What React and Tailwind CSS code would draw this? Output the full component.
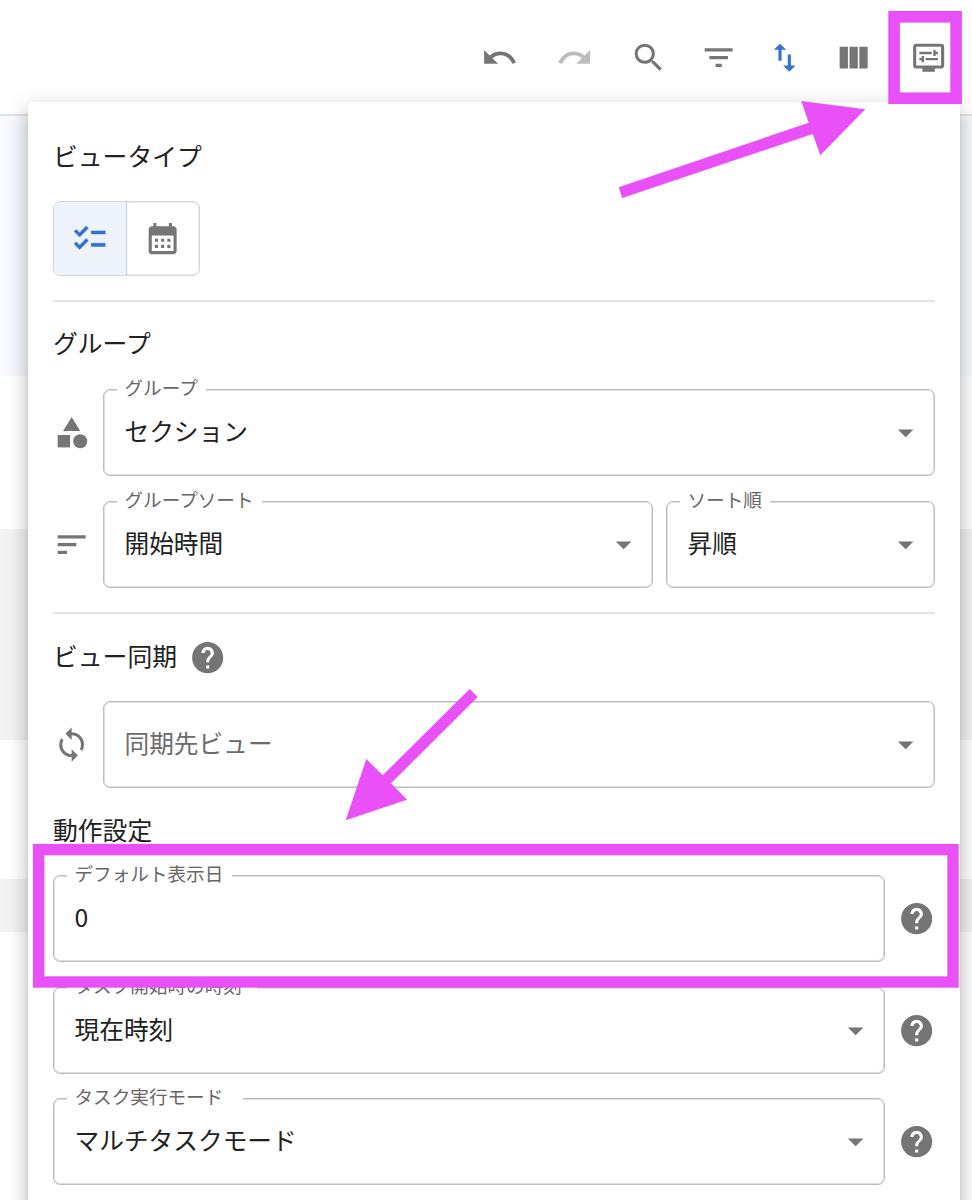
import {
  MdArrowDropDown,
  MdCalendarMonth,
  MdCategory,
  MdChecklist,
  MdDisplaySettings,
  MdFilterList,
  MdHelp,
  MdImportExport,
  MdRedo,
  MdSearch,
  MdSort,
  MdSync,
  MdUndo,
  MdViewColumn,
} from 'react-icons/md'

const ICON = 'size-[37.3px] shrink-0 text-[#757575]'

function Heading({ children, icon, className = '' }) {
  return (
    <h2 className={`flex items-center h-[37px] text-[24.8px] leading-[37px] ${className}`}>
      <span className="-mt-[4px]">{children}</span>
      {icon}
    </h2>
  )
}

// Outlined field; the label sits in a gap of the top border
function Field({ label, notch, value, placeholder, select = true, className = 'flex-1' }) {
  return (
    <div className={`relative flex items-center justify-between h-[87px] pl-[20.5px] pr-[10px] border border-[#bdbdbd] rounded-[7px] shadow-[inset_0_0_0_1px_#dedede] ${className}`}>
      {label && (
        <span className={`absolute left-[13px] -top-[17px] h-[28px] pl-[7.5px] leading-[28px] text-[18.6px] whitespace-nowrap bg-white text-[#666] ${notch}`}>
          {label}
        </span>
      )}
      <span className={`text-[24.7px] leading-[36px] -mt-[5px] ${placeholder ? 'text-[#6b6b6b]' : ''}`}>{value || placeholder}</span>
      {select && <MdArrowDropDown className={ICON} />}
    </div>
  )
}

function Toolbar() {
  return (
    <header className="flex h-[116px] pt-[39.4px] pl-[481px] border-b-2 border-[#e2e2e4] bg-white">
      <MdUndo className={ICON} />
      <MdRedo className="size-[37.3px] shrink-0 ml-[37.5px] text-[#bdbdbd]" />
      <MdSearch className={`${ICON} ml-[37.3px]`} />
      <MdFilterList className={`${ICON} ml-[32.7px]`} />
      <MdImportExport className="size-[37.3px] shrink-0 ml-[28.3px] text-[#3471d2]" />
      <MdViewColumn className={`${ICON} ml-[32.1px]`} />
      <MdDisplaySettings className={`${ICON} ml-[37.3px]`} />
    </header>
  )
}

function ViewMenu() {
  return (
    <div className="absolute left-[28px] top-[102px] w-[932px] h-[1200px] px-[25px] pt-[37px] rounded-[6px] bg-white shadow-[0_8px_8px_-5px_rgba(0,0,0,0.2),0_12px_16px_2px_rgba(0,0,0,0.14),0_5px_22px_3px_rgba(0,0,0,0.12)]">
      <Heading>ビュータイプ</Heading>
      <div className="flex w-[147px] h-[75px] mt-[25px] border border-[#d6d6d6] rounded-[7px] shadow-[inset_0_0_0_1px_#ececec] overflow-hidden">
        <div className="flex items-center justify-center w-[73px] border-r border-[#c6ccd6] bg-[#edf2fb]">
          <MdChecklist className="size-[37.3px] text-[#3471d2] [&>path:last-child]:stroke-current [&>path:last-child]:[stroke-width:0.3]" />
        </div>
        <div className="flex items-center justify-center flex-1">
          <MdCalendarMonth className={ICON} />
        </div>
      </div>

      <hr className="mt-[24px] border-0 h-[2px] bg-[#e3e3e3]" />
      <Heading className="mt-[24px]">グループ</Heading>
      <div className="flex items-center gap-[13.2px] -ml-[0.5px] mt-[26px]">
        <MdCategory className={ICON} />
        <Field label="グループ" notch="w-[89px]" value="セクション" />
      </div>
      <div className="flex items-center gap-[13.2px] -ml-[0.5px] mt-[25px]">
        <MdSort className={ICON} />
        <Field label="グループソート" notch="w-[145px]" value="開始時間" />
        <Field label="ソート順" notch="w-[90px]" value="昇順" className="w-[269px]" />
      </div>

      <hr className="mt-[24px] border-0 h-[2px] bg-[#e3e3e3]" />
      <Heading className="mt-[25px]" icon={<MdHelp className={`${ICON} ml-[12.2px]`} />}>ビュー同期</Heading>
      <div className="flex items-center gap-[13.2px] -ml-[0.5px] mt-[25px]">
        <MdSync className={ICON} />
        <Field placeholder="同期先ビュー" />
      </div>

      <Heading className="mt-[25px]">動作設定</Heading>
      <div className="flex items-center gap-[12.7px] mt-[25px]">
        <Field label="デフォルト表示日" notch="w-[165px]" value="0" select={false} />
        <MdHelp className={ICON} />
      </div>
      <div className="flex items-center gap-[12.7px] mt-[25px]">
        <Field label="タスク開始時の時刻" notch="w-[190px]" value="現在時刻" />
        <MdHelp className={ICON} />
      </div>
      <div className="flex items-center gap-[12.7px] mt-[24px]">
        <Field label="タスク実行モード" notch="w-[176px]" value="マルチタスクモード" />
        <MdHelp className={ICON} />
      </div>
    </div>
  )
}

// Frames and arrows pointing at the settings button and the default day field
function Annotations() {
  return (
    <svg className="absolute inset-0 pointer-events-none" width="972" height="1200" viewBox="0 0 972 1200" fill="#ea50f8">
      <rect x="894.1" y="16.8" width="62" height="81.4" fill="none" stroke="#ea50f8" strokeWidth="11.6" />
      <rect x="38.6" y="849.6" width="914.4" height="132.4" fill="none" stroke="#ea50f8" strokeWidth="11.4" />
      <path d="M618.7 187.3 808.7 122.7 801.3 101 865.3 109.3 820.3 155.3 812.7 134 622.3 198z" />
      <path d="M469.7 689 477.7 697 391 783.3 407 799.7 345.7 820.3 366.3 759 382.7 775.3z" />
    </svg>
  )
}

export default function App() {
  return (
    <div className="relative h-[1200px] overflow-hidden bg-white text-[#212121] font-['Noto_Sans_CJK_JP',sans-serif]">
      <Toolbar />
      <div className="h-[260px] bg-[#f7f9ff]" />
      <div className="h-[153px]" />
      <div className="h-[211px] bg-[#f3f3f3]" />
      <div className="h-[139px]" />
      <div className="h-[53px] bg-[#f3f3f3]" />
      <ViewMenu />
      <Annotations />
    </div>
  )
}
